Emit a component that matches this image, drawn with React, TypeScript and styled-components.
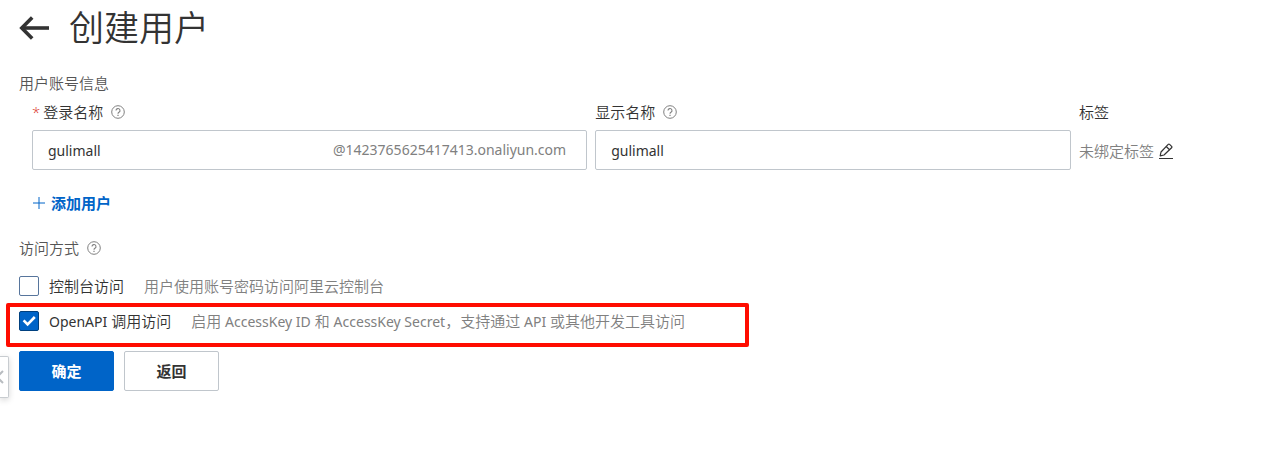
import React from "react";
import styled, { createGlobalStyle, css } from "styled-components";

const GlobalStyle = createGlobalStyle`
  *, *::before, *::after { box-sizing: border-box; }
  body {
    margin: 0;
    background: #fff;
    color: #333;
    font-family: "Open Sans", "Noto Sans CJK SC", sans-serif;
    font-size: 15px;
    line-height: 24px;
  }
  button, input { font: inherit; color: inherit; }
`;

const latinText = css`
  font-family: "Noto Sans", "Noto Sans CJK SC", sans-serif;
  font-size: 14px;
  font-weight: 400;
`;

const Page = styled.main`
  position: relative;
  padding: 0 16px 24px 19px;
`;

const Header = styled.header`
  display: flex;
  align-items: center;
  gap: 20px;
  height: 56px;
`;

const BackButton = styled.button`
  display: flex;
  padding: 0;
  border: 0;
  background: none;
  cursor: pointer;
`;

const Title = styled.h1`
  margin: 0;
  font-size: 35px;
  font-weight: 350;
  line-height: 56px;
`;

const SectionTitle = styled.h2<{ $tight?: boolean }>`
  display: flex;
  align-items: center;
  gap: 8px;
  margin: ${(p) => (p.$tight ? "15px 0 5px" : "21px 0 14px")};
  color: #555;
  font-size: 15px;
  font-weight: 350;
  line-height: 24px;
`;

const UserRow = styled.div`
  display: grid;
  grid-template-columns: 7fr 6fr 168px;
  gap: 8px;
  margin-left: 13px;
`;

const Field = styled.div`
  display: flex;
  flex-direction: column;
  gap: 6px;
  min-width: 0;
`;

const FieldLabel = styled.label`
  display: flex;
  align-items: center;
  gap: 8px;
  font-weight: 350;
`;

const Required = styled.span`
  margin-right: -5px;
  color: #d93026;
`;

const InputBox = styled.div`
  display: flex;
  align-items: center;
  height: 40px;
  border: 1px solid #c0c6cc;
  border-radius: 2px;
`;

const TextInput = styled.input`
  flex: 1;
  min-width: 0;
  height: 38px;
  padding: 0 15px;
  border: 0;
  outline: 0;
  background: transparent;
  ${latinText}
`;

const Latin = styled.span`
  ${latinText}
`;

const Suffix = styled.span`
  padding-right: 20px;
  color: #808080;
  ${latinText}
`;

const TagValue = styled.div`
  display: flex;
  align-items: center;
  gap: 5px;
  height: 42px;
  color: #808080;
  font-weight: 350;
`;

const EditButton = styled.button`
  display: flex;
  padding: 0 0 1px;
  border: 0;
  border-bottom: 1px solid #333;
  background: none;
  cursor: pointer;
`;

const AddButton = styled.button`
  display: flex;
  align-items: center;
  gap: 6px;
  margin: 19px 0 0 14px;
  padding: 0;
  border: 0;
  background: none;
  color: #0064c8;
  font-weight: 700;
  line-height: 24px;
  cursor: pointer;
`;

const Option = styled.div`
  position: relative;
  display: flex;
  align-items: center;
  gap: 20px;
  height: 24px;
  margin-bottom: 11px;
  font-weight: 350;
`;

const OptionLabel = styled.label`
  display: flex;
  align-items: center;
  gap: 10px;
  color: #333;
`;

const Hint = styled.span`
  color: #808080;
`;

const Tick = styled.span`
  position: relative;
  display: flex;
  svg {
    position: absolute;
    inset: 0;
    opacity: 0;
    pointer-events: none;
  }
  input:checked + svg { opacity: 1; }
`;

const Checkbox = styled.input`
  appearance: none;
  width: 20px;
  height: 20px;
  margin: 0;
  border: 1px solid #57759c;
  border-radius: 2px;
  background: #fff;
  &:checked {
    border-color: #00407f;
    background: #0064c8;
  }
`;

const Highlight = styled.span`
  position: absolute;
  top: -6px;
  left: -13px;
  width: 743px;
  height: 44px;
  border: 4px solid #ff0c00;
  border-radius: 2px;
  pointer-events: none;
`;

const Actions = styled.div`
  display: flex;
  gap: 10px;
  margin-top: 18px;
`;

const Button = styled.button<{ $primary?: boolean }>`
  width: 95px;
  height: 40px;
  padding: 0;
  border: 1px solid #c0c6cc;
  border-radius: 2px;
  background: #fff;
  font-weight: 700;
  cursor: pointer;
  ${(p) =>
    p.$primary &&
    css`
      border-color: #0064c8;
      background: #0064c8;
      color: #fff;
    `}
`;

const DrawerHandle = styled.button`
  position: absolute;
  top: 356px;
  left: 0;
  display: flex;
  align-items: center;
  width: 9px;
  height: 42px;
  padding: 0;
  border: 1px solid #c8ccd0;
  border-left: 0;
  border-radius: 0 2px 2px 0;
  background: #fff;
  box-shadow: 0 2px 6px rgba(0, 0, 0, 0.16);
  cursor: pointer;
`;

const HelpIcon = () => (
  <svg width="14" height="14" viewBox="0 0 14 14" fill="none" stroke="#808080" role="img" aria-label="帮助">
    <circle cx="7" cy="7" r="6.3" />
    <path d="M5 5.6a2 2 0 1 1 3 1.7c-.7.4-1 .7-1 1.4" strokeWidth="1.1" />
    <path d="M7 9.7v1.2" strokeWidth="1.2" />
  </svg>
);

const TickIcon = () => (
  <svg width="20" height="20" viewBox="0 0 20 20" fill="none" stroke="#fff" strokeWidth="2.6" aria-hidden="true">
    <path d="M4.6 9.4l4 4 7.2-7.4" />
  </svg>
);

type AccessOptionProps = {
  label: React.ReactNode;
  hint: React.ReactNode;
  checked?: boolean;
  highlighted?: boolean;
};

const AccessOption = ({ label, hint, checked, highlighted }: AccessOptionProps) => (
  <Option>
    <OptionLabel>
      <Tick>
        <Checkbox type="checkbox" defaultChecked={checked} />
        <TickIcon />
      </Tick>
      <span>{label}</span>
    </OptionLabel>
    <Hint>{hint}</Hint>
    {highlighted && <Highlight />}
  </Option>
);

export default function App() {
  return (
    <>
      <GlobalStyle />
      <Page>
        <Header>
          <BackButton type="button" aria-label="后退">
            <svg width="30" height="24" viewBox="0 0 30 24" fill="none" stroke="#333" strokeWidth="3.6">
              <path d="M30 12H3" />
              <path d="M13.2 1.5L2.8 12l10.4 10.5" />
            </svg>
          </BackButton>
          <Title>创建用户</Title>
        </Header>

        <SectionTitle $tight>用户账号信息</SectionTitle>
        <UserRow>
          <Field>
            <FieldLabel htmlFor="login-name">
              <Required>*</Required>登录名称 <HelpIcon />
            </FieldLabel>
            <InputBox>
              <TextInput id="login-name" defaultValue="gulimall" />
              <Suffix>@1423765625417413.onaliyun.com</Suffix>
            </InputBox>
          </Field>
          <Field>
            <FieldLabel htmlFor="display-name">
              显示名称 <HelpIcon />
            </FieldLabel>
            <InputBox>
              <TextInput id="display-name" defaultValue="gulimall" />
            </InputBox>
          </Field>
          <Field>
            <FieldLabel as="span">标签</FieldLabel>
            <TagValue>
              未绑定标签
              <EditButton type="button" aria-label="编辑标签">
                <svg width="14" height="14" viewBox="0 0 14 14" fill="none" stroke="#333" strokeWidth="1.2" strokeLinejoin="round">
                  <path d="M1.2 12.8L2 9 9.2 1.4a1 1 0 0 1 1.4 0L12.6 3.4a1 1 0 0 1 0 1.4L5 12z" />
                  <path d="M7.2 3.5l3.4 3.3" />
                </svg>
              </EditButton>
            </TagValue>
          </Field>
        </UserRow>
        <AddButton type="button">
          <svg width="12" height="12" viewBox="0 0 12 12" stroke="#0064c8" aria-hidden="true">
            <path d="M6 0v12M0 6h12" />
          </svg>
          添加用户
        </AddButton>

        <SectionTitle>
          访问方式 <HelpIcon />
        </SectionTitle>
        <AccessOption label="控制台访问" hint="用户使用账号密码访问阿里云控制台" />
        <AccessOption
          checked
          highlighted
          label={
            <>
              <Latin>OpenAPI</Latin> 调用访问
            </>
          }
          hint={
            <>
              启用 <Latin>AccessKey ID</Latin> 和 <Latin>AccessKey Secret</Latin>，支持通过 <Latin>API</Latin> 或其他开发工具访问
            </>
          }
        />

        <Actions>
          <Button type="submit" $primary>
            确定
          </Button>
          <Button type="button">返回</Button>
        </Actions>

        <DrawerHandle type="button" aria-label="展开侧栏">
          <svg width="5" height="14" viewBox="0 0 5 14" fill="none" stroke="#b8bcc0" strokeWidth="2" aria-hidden="true">
            <path d="M3 1L-3 7l6 6" />
          </svg>
        </DrawerHandle>
      </Page>
    </>
  );
}
